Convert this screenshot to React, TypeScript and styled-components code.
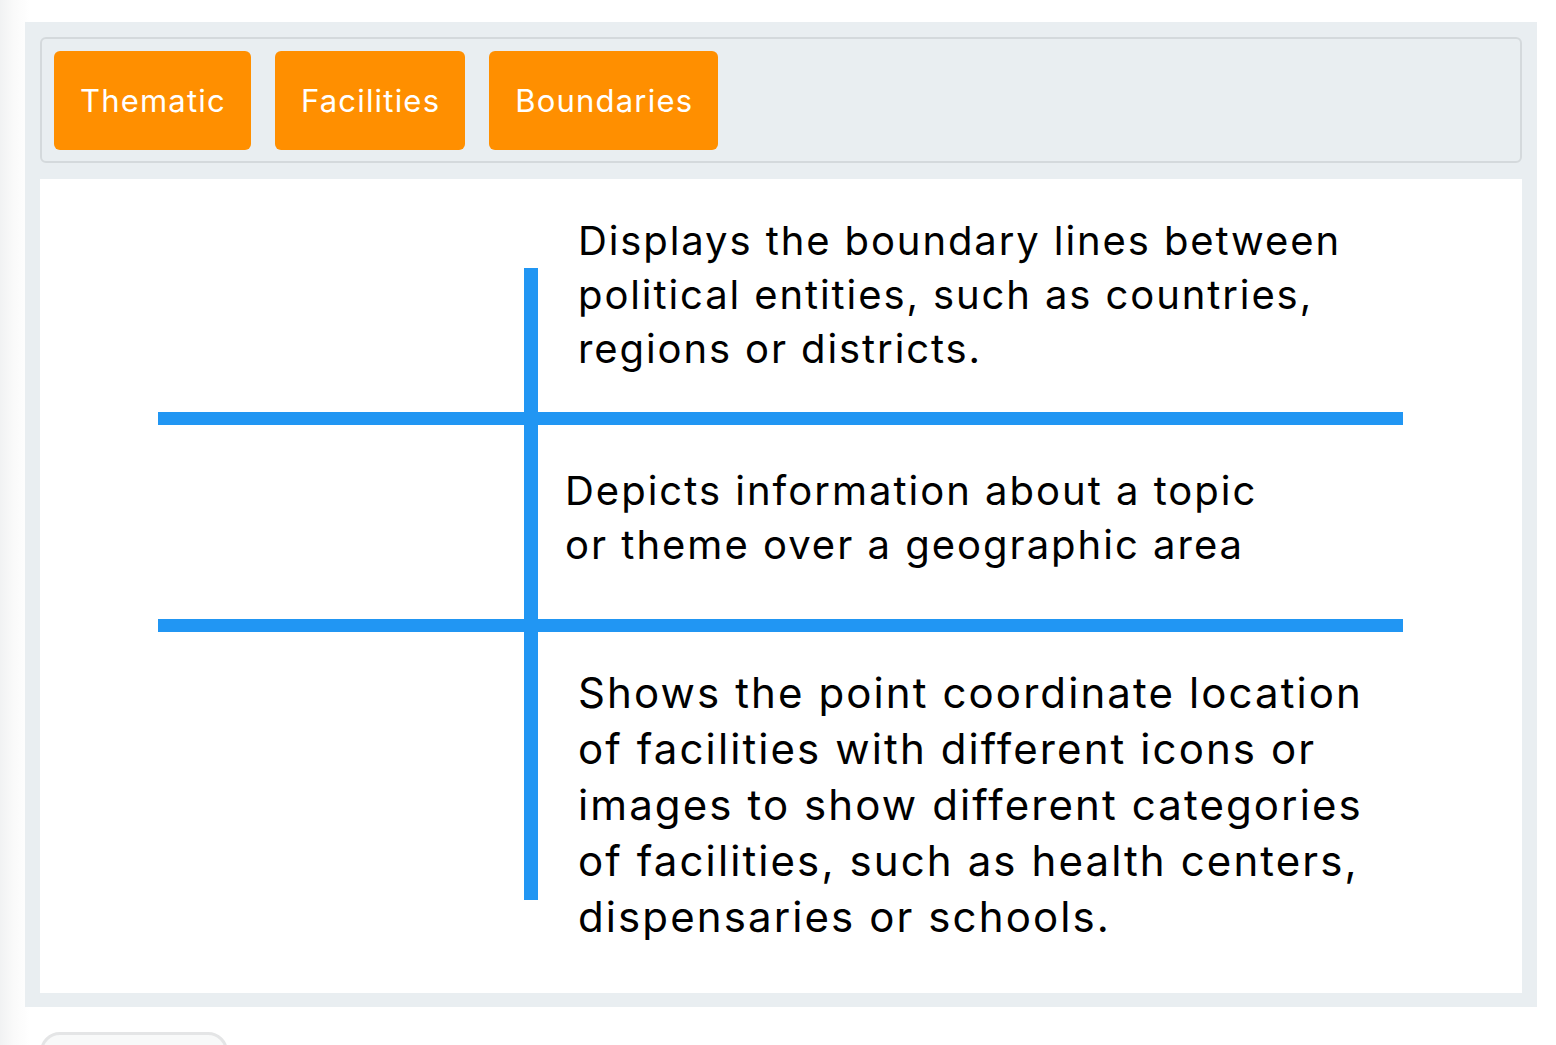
import React from "react";
import styled, { createGlobalStyle } from "styled-components";

const GlobalStyle = createGlobalStyle`
  html, body {
    margin: 0;
    padding: 0;
  }
  body {
    font-family: Inter, "Noto Sans", "Liberation Sans", sans-serif;
    background: linear-gradient(to right, #f1f2f3 0px, #fafafa 14px, #ffffff 30px);
    color: #000;
  }
`;

const Page = styled.div`
  padding: 22px 19px 0 25px;
  min-height: 1045px;
  box-sizing: border-box;
`;

const Panel = styled.section`
  width: 1512px;
  box-sizing: border-box;
  background: #e9eef1;
  padding: 15px 15px 14px;
  display: flex;
  flex-direction: column;
  gap: 16px;
`;

const Toolbar = styled.div`
  box-sizing: border-box;
  height: 126px;
  border: 2px solid #d4d9dc;
  border-radius: 6px;
  padding: 12px 12px;
  display: flex;
  align-items: flex-start;
  gap: 24px;
`;

const OptionButton = styled.button`
  height: 99px;
  padding: 0 25px 0 26px;
  border: none;
  border-radius: 6px;
  background: #ff8f00;
  color: #ffffff;
  font-family: Inter, "Noto Sans", sans-serif;
  font-size: 31px;
  font-weight: 400;
  letter-spacing: 1.2px;
  cursor: grab;
`;

const Content = styled.div`
  background: #ffffff;
  height: 814px;
  box-sizing: border-box;
  padding: 34px 119px 0 118px;
`;

const Board = styled.div`
  display: flex;
  flex-direction: column;
`;

const Row = styled.div<{ $height: number }>`
  display: grid;
  grid-template-columns: 366px 14px 1fr;
  height: ${(p) => p.$height}px;
`;

const DropZone = styled.div``;

const Stem = styled.div<{ $top: number; $bottom: number }>`
  background: #2196f3;
  margin-top: ${(p) => p.$top}px;
  margin-bottom: ${(p) => p.$bottom}px;
`;

const Divider = styled.div`
  height: 13px;
  background: #2196f3;
`;

const Description = styled.p<{
  $padTop: number;
  $padLeft: number;
  $size: number;
  $lh: number;
  $ls: number;
}>`
  margin: 0;
  padding-top: ${(p) => p.$padTop}px;
  padding-left: ${(p) => p.$padLeft}px;
  font-size: ${(p) => p.$size}px;
  line-height: ${(p) => p.$lh}px;
  letter-spacing: ${(p) => p.$ls}px;
  white-space: nowrap;
  font-weight: 400;
  color: #000;
`;

const Footer = styled.div`
  padding: 25px 0 0 15px;
`;

const Pill = styled.div`
  width: 188px;
  height: 40px;
  box-sizing: border-box;
  border: 3px solid #e4e5e6;
  border-radius: 30px;
  background: #f8f9f9;
`;

export default function App() {
  return (
    <>
      <GlobalStyle />
      <Page>
        <Panel>
          <Toolbar>
            <OptionButton>Thematic</OptionButton>
            <OptionButton>Facilities</OptionButton>
            <OptionButton>Boundaries</OptionButton>
          </Toolbar>
          <Content>
            <Board>
              <Row $height={199}>
                <DropZone />
                <Stem $top={55} $bottom={0} />
                <Description $padTop={1} $padLeft={40} $size={40} $lh={54} $ls={1.9}>
                  Displays the boundary lines between
                  <br />
                  political entities, such as countries,
                  <br />
                  regions or districts.
                </Description>
              </Row>
              <Divider />
              <Row $height={194}>
                <DropZone />
                <Stem $top={0} $bottom={0} />
                <Description $padTop={39} $padLeft={27} $size={40} $lh={54} $ls={2}>
                  Depicts information about a topic
                  <br />
                  or theme over a geographic area
                </Description>
              </Row>
              <Divider />
              <Row $height={330}>
                <DropZone />
                <Stem $top={0} $bottom={62} />
                <Description $padTop={33} $padLeft={40} $size={42} $lh={56} $ls={2.1}>
                  Shows the point coordinate location
                  <br />
                  of facilities with different icons or
                  <br />
                  images to show different categories
                  <br />
                  of facilities, such as health centers,
                  <br />
                  dispensaries or schools.
                </Description>
              </Row>
            </Board>
          </Content>
        </Panel>
        <Footer>
          <Pill />
        </Footer>
      </Page>
    </>
  );
}
